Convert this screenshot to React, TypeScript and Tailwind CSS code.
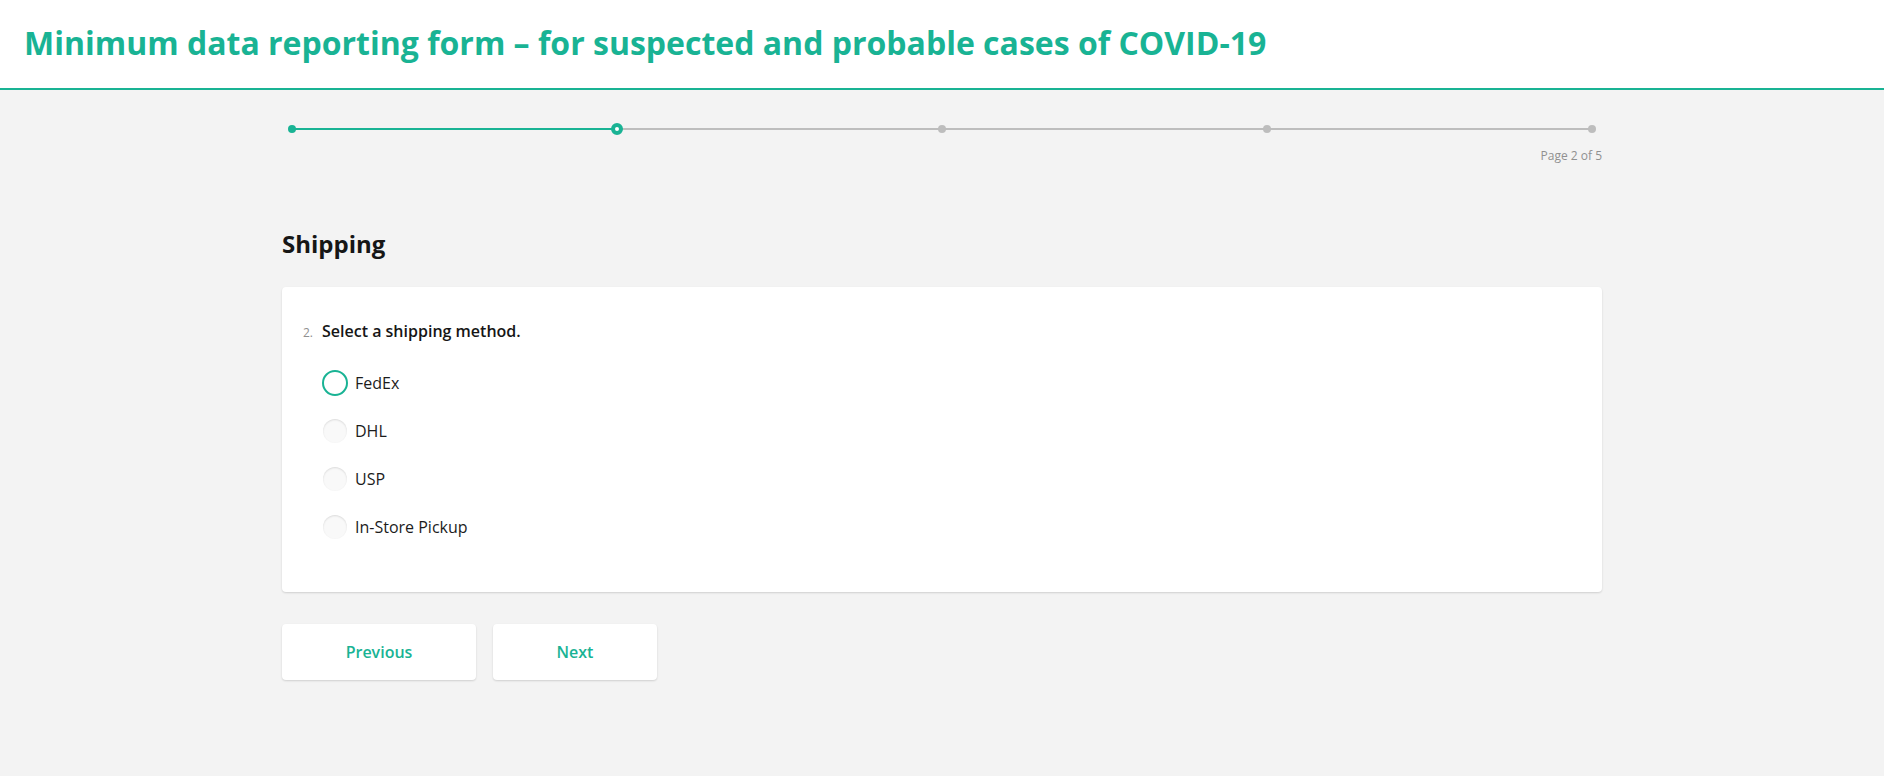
const TEAL = "#19b394";

const steps = [0, 1, 2, 3, 4];
const current = 1;

function Progress() {
  return (
    <div className="px-[10px] pt-[33px]">
      <div className="relative h-[12px]">
        <div className="absolute left-0 right-0 top-[5px] h-[2px] bg-[#bdbdbd]" />
        <div className="absolute left-0 top-[5px] h-[2px] w-1/4 bg-[#19b394]" />
        <div className="relative flex h-full items-center justify-between">
          {steps.map((s) => {
            if (s === current) {
              return (
                <span
                  key={s}
                  className="-mx-[6px] box-border size-[12px] rounded-full border-[4px] border-[#19b394] bg-white"
                />
              );
            }
            return (
              <span
                key={s}
                className={`-mx-[4px] size-[8px] rounded-full ${s < current ? "bg-[#19b394]" : "bg-[#bdbdbd]"}`}
              />
            );
          })}
        </div>
      </div>
      <div className="mt-[13px] text-right text-[12px] leading-[16px] text-[#909090] -mr-[10px]">
        Page 2 of 5
      </div>
    </div>
  );
}

function Radio({ label, focused }: { label: string; focused?: boolean }) {
  return (
    <label className="flex h-[48px] items-center">
      {focused ? (
        <span className="ml-[-1px] mr-[7px] box-border size-[26px] rounded-full border-2 border-[#19b394] bg-white" />
      ) : (
        <span className="mr-[8px] size-[24px] rounded-full bg-[#f9f9f9] shadow-[inset_0_1px_2px_rgba(0,0,0,0.12)]" />
      )}
      <span className="text-[16px] leading-[24px] text-[#1c1c1c]">{label}</span>
    </label>
  );
}

export default function App() {
  return (
    <div
      className="min-h-[776px] bg-[#f3f3f3]"
      style={{ fontFamily: "'Open Sans', 'Noto Sans', sans-serif" }}
    >
      <header className="flex h-[90px] items-center border-b-2 border-[#19b394] bg-white px-[24px] pb-[2px]">
        <h1 className="text-[32px] font-bold leading-[40px]" style={{ color: TEAL }}>
          Minimum data reporting form – for suspected and probable cases of COVID-19
        </h1>
      </header>

      <main className="mx-auto w-[1320px]">
        <Progress />

        <h2 className="mt-[64px] text-[24px] font-bold leading-[32px] text-[#161616]">Shipping</h2>

        <section className="mt-[27px] rounded-[4px] bg-white px-[21px] pb-[41px] pt-[32px] shadow-[0_1px_2px_rgba(0,0,0,0.15)]">
          <div className="flex items-baseline">
            <span className="mr-[9px] text-[12px] text-[#909090]">2.</span>
            <span className="text-[16px] font-semibold leading-[24px] text-[#161616]">
              Select a shipping method.
            </span>
          </div>
          <div className="mt-[16px] pl-[20px]">
            <Radio label="FedEx" focused />
            <Radio label="DHL" />
            <Radio label="USP" />
            <Radio label="In-Store Pickup" />
          </div>
        </section>

        <div className="mt-[32px] flex gap-[17px]">
          <button className="h-[56px] w-[194px] rounded-[4px] bg-white text-[16px] font-semibold text-[#19b394] shadow-[0_1px_2px_rgba(0,0,0,0.15)]">
            Previous
          </button>
          <button className="h-[56px] w-[164px] rounded-[4px] bg-white text-[16px] font-semibold text-[#19b394] shadow-[0_1px_2px_rgba(0,0,0,0.15)]">
            Next
          </button>
        </div>
      </main>
    </div>
  );
}
